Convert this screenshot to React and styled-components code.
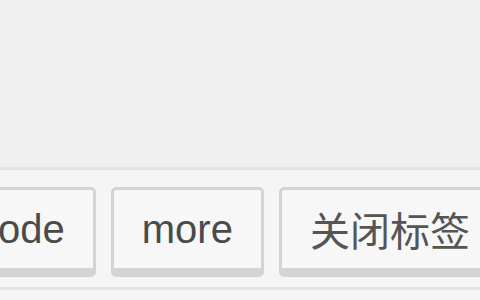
import React from "react";
import styled, { createGlobalStyle } from "styled-components";

const GlobalStyle = createGlobalStyle`
  html, body {
    margin: 0;
    padding: 0;
    background: #f5f5f5;
    font-family: "Liberation Sans", "Noto Sans CJK SC", sans-serif;
  }
`;

const Page = styled.div`
  width: 480px;
  height: 300px;
  overflow: hidden;
  display: flex;
  flex-direction: column;
  background: #f5f5f5;
`;

const Editor = styled.div`
  height: 167px;
  flex-shrink: 0;
  background: #f0f0f0;
  border-bottom: 3px solid #e3e3e3;
`;

const Toolbar = styled.div`
  height: 120px;
  flex-shrink: 0;
  display: flex;
  align-items: flex-start;
  gap: 15px;
  padding-top: 17px;
  box-sizing: border-box;
  margin-left: -53px;
  border-bottom: 3px solid #e4e4e4;
`;

const Button = styled.button`
  flex-shrink: 0;
  height: 90px;
  padding: 0 28px;
  box-sizing: border-box;
  display: flex;
  align-items: center;
  background: #f7f7f7;
  border: 3px solid #d4d4d4;
  border-bottom-width: 9px;
  border-radius: 5px;
  font-family: "Liberation Sans", "Noto Sans CJK SC", sans-serif;
  font-size: 40px;
  color: ${(p) => (p.$cjk ? "#555555" : "#4a4a4a")};
  white-space: nowrap;
  cursor: pointer;
`;

const buttons = [
  { label: "code" },
  { label: "more" },
  { label: "关闭标签", cjk: true },
];

export default function App() {
  return (
    <Page>
      <GlobalStyle />
      <Editor />
      <Toolbar>
        {buttons.map((b) => (
          <Button key={b.label} $cjk={b.cjk}>
            {b.label}
          </Button>
        ))}
      </Toolbar>
    </Page>
  );
}
